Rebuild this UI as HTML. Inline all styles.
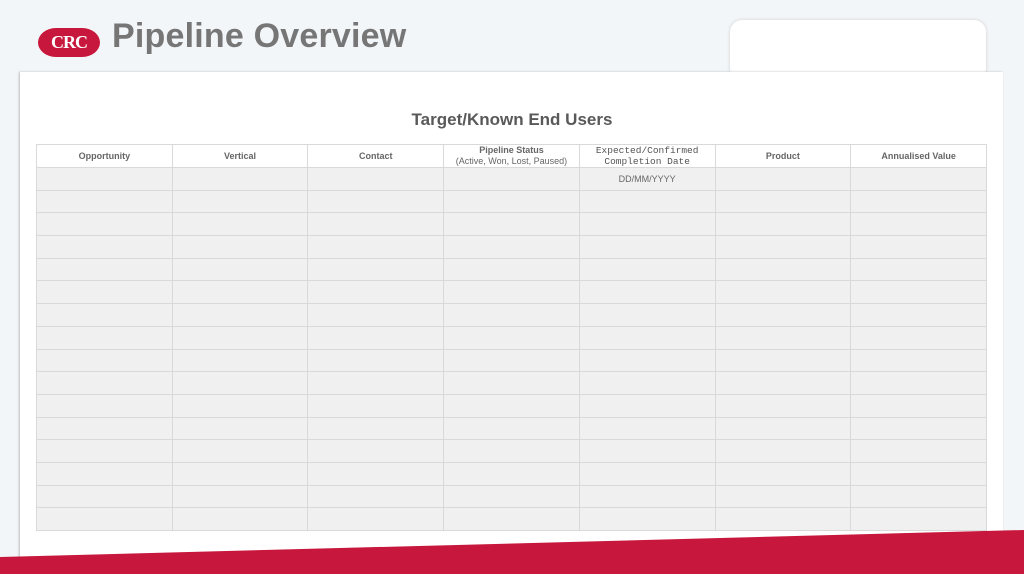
<!DOCTYPE html><html><head><style>
body{margin:0;width:1024px;height:574px;background:#f3f6f9;position:relative;overflow:hidden;font-family:"Liberation Sans",sans-serif}
.panel{position:absolute;left:20px;top:72px;width:983px;height:500px;background:#fff;box-shadow:-1px 0 2px #bbb}
.box{position:absolute;left:730px;top:20px;width:256px;height:60px;background:#fff;border-radius:12px;box-shadow:0 0 3px #ccc}
h1{position:absolute;left:112px;top:17px;margin:0;font-size:34px;font-weight:bold;color:#767676;letter-spacing:0.2px}
.logo{position:absolute;left:38px;top:28px;width:62px;height:29px;background:#c8173c;border-radius:18px/50%;color:#fff;font:bold 18px "Liberation Serif",serif;text-align:center;line-height:29px;letter-spacing:-1px}
.t{position:absolute;left:0;width:1024px;top:110px;text-align:center;font-size:17px;font-weight:bold;color:#595959}
table{position:absolute;left:36px;top:144px;width:951px;border-collapse:collapse;table-layout:fixed}
td{border:1px solid #d9d9d9;height:21.7px;padding:0;background:#f0f0f0;font-size:9px;color:#666;text-align:center;vertical-align:middle}
tr.h td{background:#fff;height:22px;font-weight:bold;font-size:9px}
tr.h td.m{font-family:"Liberation Mono",monospace;font-weight:normal;font-size:9.5px;line-height:11px;color:#555}
.red{position:absolute;left:0;top:0}
</style></head><body>
<div class="box"></div>
<div class="panel"></div>
<div class="logo">CRC</div>
<h1>Pipeline Overview</h1>
<div class="t">Target/Known End Users</div>
<table>
<tr class="h"><td>Opportunity</td><td>Vertical</td><td>Contact</td><td><span style="line-height:11px">Pipeline Status<br><span style="font-weight:normal">(Active, Won, Lost, Paused)</span></span></td><td class="m">Expected/Confirmed<br>Completion Date</td><td>Product</td><td>Annualised Value</td></tr>
<tr><td></td><td></td><td></td><td></td><td>DD/MM/YYYY</td><td></td><td></td></tr>
<tr><td></td><td></td><td></td><td></td><td></td><td></td><td></td></tr>
<tr><td></td><td></td><td></td><td></td><td></td><td></td><td></td></tr>
<tr><td></td><td></td><td></td><td></td><td></td><td></td><td></td></tr>
<tr><td></td><td></td><td></td><td></td><td></td><td></td><td></td></tr>
<tr><td></td><td></td><td></td><td></td><td></td><td></td><td></td></tr>
<tr><td></td><td></td><td></td><td></td><td></td><td></td><td></td></tr>
<tr><td></td><td></td><td></td><td></td><td></td><td></td><td></td></tr>
<tr><td></td><td></td><td></td><td></td><td></td><td></td><td></td></tr>
<tr><td></td><td></td><td></td><td></td><td></td><td></td><td></td></tr>
<tr><td></td><td></td><td></td><td></td><td></td><td></td><td></td></tr>
<tr><td></td><td></td><td></td><td></td><td></td><td></td><td></td></tr>
<tr><td></td><td></td><td></td><td></td><td></td><td></td><td></td></tr>
<tr><td></td><td></td><td></td><td></td><td></td><td></td><td></td></tr>
<tr><td></td><td></td><td></td><td></td><td></td><td></td><td></td></tr>
<tr><td></td><td></td><td></td><td></td><td></td><td></td><td></td></tr>
</table>
<svg class="red" width="1024" height="574"><polygon points="0,557 1024,530 1024,574 0,574" fill="#c8173c"/></svg>
</body></html>
